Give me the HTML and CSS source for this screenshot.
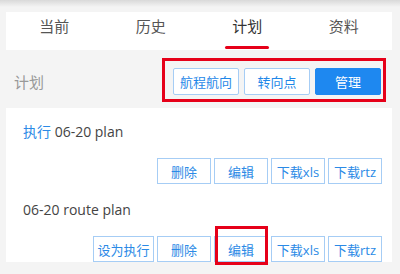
FILE: index.html
```
<!DOCTYPE html>
<html lang="zh-CN">
  <head>
    <meta charset="UTF-8" />
    <meta name="viewport" content="width=device-width, initial-scale=1.0" />
    <title>计划</title>
    <link rel="stylesheet" href="styles.css">
  </head>
  <body>
    <div class="tabs">
      <div class="tab">当前</div>
      <div class="tab">历史</div>
      <div class="tab active">计划</div>
      <div class="tab">资料</div>
    </div>
    <div class="bar">
      <span class="bar-title">计划</span>
      <div class="actions marked">
        <button class="btn">航程航向</button>
        <button class="btn">转向点</button>
        <button class="btn primary">管理</button>
      </div>
    </div>
    <div class="card">
      <div class="plan">
        <p class="plan-name"><span class="running">执行</span> 06-20 plan</p>
        <div class="ops">
          <button class="op">删除</button>
          <button class="op">编辑</button>
          <button class="op">下载xls</button>
          <button class="op">下载rtz</button>
        </div>
      </div>
      <div class="plan">
        <p class="plan-name">06-20 route plan</p>
        <div class="ops">
          <button class="op wide">设为执行</button>
          <button class="op">删除</button>
          <button class="op marked">编辑</button>
          <button class="op">下载xls</button>
          <button class="op">下载rtz</button>
        </div>
      </div>
    </div>
  </body>
</html>
```

FILE: styles.css
```
html,
body {
  margin: 0;
  padding: 0;
  height: 100%;
  font-family: 'Open Sans', 'Noto Sans CJK SC', sans-serif;
  background: linear-gradient(#d9d9d9, #f4f4f4 7px) #f4f4f4;
}
.tabs {
  display: flex;
  height: 38px;
  margin: 12px 8px 0 6px;
  background: #fff;
}
.tab {
  flex: 1;
  display: flex;
  flex-direction: column;
  align-items: center;
  padding-top: 5px;
  box-sizing: border-box;
  font-size: 15px;
  line-height: 18px;
  color: #555;
}
.tab.active {
  color: #333;
}
.tab.active::after {
  content: '';
  width: 44px;
  height: 3px;
  margin-top: auto;
  margin-bottom: 1px;
  border-radius: 2px;
  background: #e60019;
}
.bar {
  display: flex;
  align-items: center;
  justify-content: space-between;
  padding: 18px 19px 13px 14px;
}
.bar-title {
  font-size: 15px;
  color: #999;
}
.actions {
  display: flex;
  gap: 5px;
}
.btn {
  width: 66px;
  height: 27px;
  padding: 0;
  font-family: inherit;
  font-size: 13px;
  color: #1f87e8;
  background: #fff;
  border: 1px solid #a6cdf5;
  border-radius: 2px;
}
.btn.primary {
  color: #fff;
  background: #1e88f0;
  border-color: #1e88f0;
}
.marked {
  position: relative;
}
.actions.marked::after {
  content: '';
  position: absolute;
  left: -11px;
  right: -5px;
  top: -10px;
  bottom: -7px;
  border: 3px solid #e60019;
}
.card {
  margin: 0 8px 0 6px;
  padding: 0 10px 0 17px;
  background: #fff;
}
.plan {
  padding-top: 14px;
}
.plan + .plan {
  padding-top: 16px;
}
.plan-name {
  margin: 0;
  font-size: 14px;
  line-height: 20px;
  color: #444;
}
.running {
  color: #2b8ae6;
}
.ops {
  display: flex;
  justify-content: flex-end;
  gap: 3px;
  margin-top: 16px;
}
.op {
  width: 54px;
  height: 26px;
  padding: 0;
  font-family: inherit;
  font-size: 13px;
  color: #2b8ae6;
  background: #fff;
  border: 1px solid #a6cdf5;
}
.op.wide {
  width: 61px;
}
.op.marked::after {
  content: '';
  position: absolute;
  left: 0;
  right: -1px;
  top: -11px;
  bottom: -4px;
  border: 3px solid #e60019;
}
```
